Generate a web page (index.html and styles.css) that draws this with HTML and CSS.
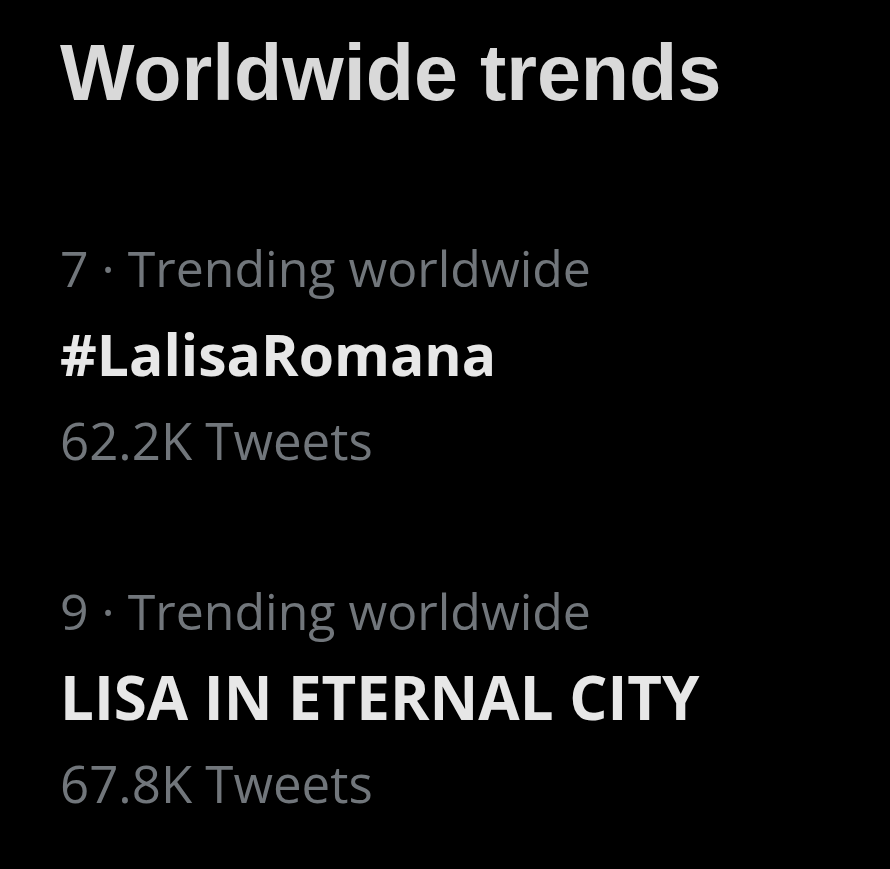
FILE: index.html
```html
<!DOCTYPE html>
<html>
<head>
<meta charset="utf-8">
<link rel="stylesheet" href="styles.css">
</head>
<body>
<main class="page">
  <h1 class="title">Worldwide trends</h1>
  <section class="trend trend-first">
    <div class="meta">7 · Trending worldwide</div>
    <div class="name">#LalisaRomana</div>
    <div class="count">62.2K Tweets</div>
  </section>
  <section class="trend trend-second">
    <div class="meta">9 · Trending worldwide</div>
    <div class="name name-caps">LISA IN ETERNAL CITY</div>
    <div class="count">67.8K Tweets</div>
  </section>
</main>
</body>
</html>
```

FILE: styles.css
```css
html, body {
  margin: 0;
  padding: 0;
  background: #000;
}
.page {
  width: 890px;
  height: 869px;
  box-sizing: border-box;
  padding: 34px 0 0 60px;
  overflow: hidden;
}
.title {
  margin: 0;
  font-family: "Liberation Sans", Arial, sans-serif;
  font-weight: 700;
  font-size: 79px;
  line-height: 78px;
  color: #d9d9d9;
}
.trend {
  font-family: "Open Sans", sans-serif;
  line-height: 86px;
}
.trend-first { margin-top: 113px; }
.trend-second { margin-top: 85px; }
.meta, .count {
  font-size: 50px;
  color: #71767b;
}
.count {
  font-size: 51px;
}
.name {
  font-size: 57px;
  font-weight: 700;
  color: #e7e7e7;
}
.name-caps {
  font-size: 60px;
}
```
